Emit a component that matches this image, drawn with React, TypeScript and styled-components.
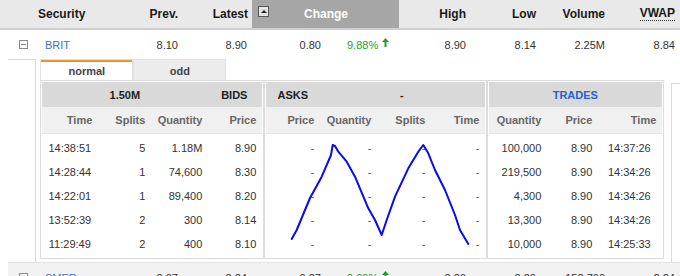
import React from 'react';
import styled, { createGlobalStyle, css } from 'styled-components';

const GlobalStyle = createGlobalStyle`
  html, body {
    margin: 0;
    padding: 0;
    background: #fff;
    overflow: hidden;
  }
  body {
    font-family: "Liberation Sans", Arial, sans-serif;
    color: #333;
  }
`;

const COLS = '92px 53px 69px 74px 73px 72px 70px 69px 70px';

const Page = styled.div`
  width: 680px;
  height: 276px;
  overflow: hidden;
`;

const HeaderRow = styled.div`
  display: grid;
  grid-template-columns: 38px ${COLS};
  height: 28px;
  background: #e9e9e9;
  border-bottom: 2px solid #cfcfcf;
  font-size: 12px;
  font-weight: bold;
  color: #1a1a1a;
`;

const HeadCell = styled.div<{ $align?: 'left' | 'right'; $pad?: number; $dotted?: boolean }>`
  display: flex;
  align-items: center;
  justify-content: ${p => (p.$align === 'left' ? 'flex-start' : 'flex-end')};
  padding-right: ${p => (p.$align === 'left' ? 0 : p.$pad ?? 5)}px;
  span {
    ${p =>
      p.$dotted &&
      css`
        border-bottom: 1px dotted #333;
        line-height: 13px;
      `}
  }
`;

const ChangeHead = styled.div`
  grid-column: span 2;
  display: flex;
  align-items: center;
  background: #a6a6a6;
  color: #fff;
  padding: 0 16px 0 6px;
  span {
    flex: 1;
    text-align: center;
  }
`;

const SortBox = styled.div`
  width: 9px;
  height: 9px;
  border: 1px solid #555;
  background: #e4e4e4;
  margin-top: -6px;
  display: flex;
  align-items: center;
  justify-content: center;
  &::after {
    content: '';
    border-left: 3px solid transparent;
    border-right: 3px solid transparent;
    border-bottom: 3px solid #222;
  }
`;

const DataRow = styled.div<{ $shaded?: boolean }>`
  display: grid;
  grid-template-columns: 30px ${COLS};
  height: 29px;
  margin-left: 8px;
  font-size: 11px;
  color: #333;
  background: ${p => (p.$shaded ? '#f2f2f2' : '#fff')};
  border-top: ${p => (p.$shaded ? '1px solid #e2e2e2' : 'none')};
`;

const Cell = styled.div<{ $align?: 'left' | 'right'; $padLeft?: number }>`
  display: flex;
  align-items: center;
  justify-content: ${p => (p.$align === 'left' ? 'flex-start' : 'flex-end')};
  padding-left: ${p => p.$padLeft ?? 0}px;
  padding-right: ${p => (p.$align === 'left' ? 0 : 5)}px;
`;

const Expander = styled.div`
  display: flex;
  align-items: center;
  padding-left: 11px;
  &::before {
    content: '';
    width: 7px;
    height: 7px;
    border: 1px solid #8a8a8a;
    background: linear-gradient(#8a8a8a, #8a8a8a) center / 5px 1px no-repeat;
  }
`;

const Link = styled.span`
  color: #3b6fd4;
`;

const Up = styled.span`
  color: #1f9e2a;
  display: inline-flex;
  align-items: center;
  gap: 4px;
  svg {
    margin-top: -5px;
  }
`;

const DetailRow = styled.div`
  display: flex;
  margin-left: 8px;
  height: 203px;
`;

const Gutter = styled.div`
  box-sizing: border-box;
  width: 33px;
  border-top: 1px solid #dcdcdc;
  border-right: 1px solid #dcdcdc;
`;

const Panel = styled.div`
  margin-left: 4px;
  width: 624px;
  display: flex;
  flex-direction: column;
`;

const Tabs = styled.div`
  display: flex;
  height: 21px;
`;

const Tab = styled.div<{ $active?: boolean; $w: number }>`
  box-sizing: border-box;
  width: ${p => p.$w}px;
  border: 1px solid #e2e2e2;
  border-bottom: none;
  background: ${p => (p.$active ? '#fff' : '#ececec')};
  box-shadow: ${p => (p.$active ? 'inset 0 2px 0 #f0922e' : 'none')};
  font-size: 11px;
  font-weight: bold;
  color: #444;
  display: flex;
  align-items: center;
  justify-content: center;
  padding-top: 1px;
`;

const Boxes = styled.div`
  display: flex;
  height: 179px;
`;

const Box = styled.div<{ $w: number }>`
  box-sizing: border-box;
  width: ${p => p.$w}px;
  border: 1px solid #dcdcdc;
  padding: 1px;
  font-size: 11px;
`;

const Grid = styled.div<{ $cols: string }>`
  display: grid;
  grid-template-columns: ${p => p.$cols};
`;

const Band = styled(Grid)`
  height: 25px;
  background: #d9d9d9;
  font-weight: bold;
  color: #1e1e1e;
`;

const SubHead = styled(Grid)`
  height: 26px;
  background: #f0f0f0;
  border-bottom: 1px solid #e4e4e4;
  font-weight: bold;
  color: #666;
`;

const Body = styled.div`
  position: relative;
  padding-top: 2px;
`;

const BodyRow = styled(Grid)`
  height: 24px;
  color: #333;
`;

const T = styled.div<{ $align?: 'left' | 'right' | 'center'; $span?: number; $color?: string; $pl?: number }>`
  grid-column: span ${p => p.$span ?? 1};
  display: flex;
  align-items: center;
  justify-content: ${p =>
    p.$align === 'center' ? 'center' : p.$align === 'left' ? 'flex-start' : 'flex-end'};
  padding-right: ${p => (p.$align === 'right' || !p.$align ? 5 : 0)}px;
  padding-left: ${p => p.$pl ?? 0}px;
  color: ${p => p.$color ?? 'inherit'};
`;

const Spark = styled.svg`
  position: absolute;
  left: 0;
  top: 2px;
  pointer-events: none;
`;

const SideBox = styled.div`
  box-sizing: border-box;
  margin: 24px 0 0 7px;
  width: 10px;
  border-left: 1px solid #dcdcdc;
  border-top: 1px solid #dcdcdc;
`;

const Arrow = () => (
  <svg width="7" height="9" viewBox="0 0 7 9">
    <path d="M3.5 0 L7 4 L0 4 Z" fill="#1f9e2a" />
    <rect x="2.5" y="3.5" width="2" height="5.5" fill="#1f9e2a" />
  </svg>
);

const bids = [
  ['14:38:51', '5', '1.18M', '8.90'],
  ['14:28:44', '1', '74,600', '8.30'],
  ['14:22:01', '1', '89,400', '8.20'],
  ['13:52:39', '2', '300', '8.14'],
  ['11:29:49', '2', '400', '8.10'],
];

const trades = [
  ['100,000', '8.90', '14:37:26'],
  ['219,500', '8.90', '14:34:26'],
  ['4,300', '8.90', '14:34:26'],
  ['13,300', '8.90', '14:34:26'],
  ['10,000', '8.90', '14:25:33'],
];

const sparkPoints = [
  [25.7, 103], [30.7, 94], [44, 62], [55.7, 40.7], [65, 19], [66.7, 9], [69, 10],
  [72.3, 15.7], [80.7, 25.7], [89, 40.7], [102.3, 72.3], [109, 84], [115.7, 99],
  [120.7, 84], [129, 60.7], [142.3, 32.3], [152.3, 15.7], [157.3, 9], [162.3, 17.3],
  [169, 34], [179, 54], [189, 79], [194, 94], [202.3, 108],
];

const BID_COLS = '55px 53px 57px 54px';
const ASK_COLS = '53px 57px 54px 54px';
const TRADE_COLS = '57px 51px 64px';

interface QuoteProps {
  code: string;
  prev: string;
  latest: string;
  change: string;
  pct: string;
  high: string;
  low: string;
  volume: string;
  vwap: string;
  shaded?: boolean;
}

const QuoteRow: React.FC<QuoteProps> = ({ code, prev, latest, change, pct, high, low, volume, vwap, shaded }) => (
  <DataRow $shaded={shaded}>
    <Expander />
    <Cell $align="left" $padLeft={7}>
      <Link>{code}</Link>
    </Cell>
    <Cell>{prev}</Cell>
    <Cell>{latest}</Cell>
    <Cell>{change}</Cell>
    <Cell $align="left" $padLeft={21}>
      <Up>
        {pct}
        <Arrow />
      </Up>
    </Cell>
    <Cell>{high}</Cell>
    <Cell>{low}</Cell>
    <Cell>{volume}</Cell>
    <Cell>{vwap}</Cell>
  </DataRow>
);

export default function App() {
  return (
    <Page>
      <GlobalStyle />
      <HeaderRow>
        <div />
        <HeadCell $align="left">Security</HeadCell>
        <HeadCell>Prev.</HeadCell>
        <HeadCell $pad={4}>Latest</HeadCell>
        <ChangeHead>
          <SortBox />
          <span>Change</span>
        </ChangeHead>
        <HeadCell>High</HeadCell>
        <HeadCell>Low</HeadCell>
        <HeadCell>Volume</HeadCell>
        <HeadCell $dotted>
          <span>VWAP</span>
        </HeadCell>
      </HeaderRow>

      <QuoteRow code="BRIT" prev="8.10" latest="8.90" change="0.80" pct="9.88%" high="8.90" low="8.14" volume="2.25M" vwap="8.84" />

      <DetailRow>
        <Gutter />
        <Panel>
          <Tabs>
            <Tab $active $w={93}>normal</Tab>
            <Tab $w={93}>odd</Tab>
          </Tabs>
          <Boxes>
            <Box $w={224}>
              <Band $cols={BID_COLS}>
                <T $span={3} $align="center">1.50M</T>
                <T $align="center">BIDS</T>
              </Band>
              <SubHead $cols={BID_COLS}>
                <T>Time</T>
                <T>Splits</T>
                <T>Quantity</T>
                <T>Price</T>
              </SubHead>
              <Body>
                {bids.map(r => (
                  <BodyRow key={r[0]} $cols={BID_COLS}>
                    <T $align="center">{r[0]}</T>
                    <T>{r[1]}</T>
                    <T>{r[2]}</T>
                    <T>{r[3]}</T>
                  </BodyRow>
                ))}
              </Body>
            </Box>
            <Box $w={223}>
              <Band $cols={ASK_COLS}>
                <T $align="center">ASKS</T>
                <T $span={3} $align="center">-</T>
              </Band>
              <SubHead $cols={ASK_COLS}>
                <T>Price</T>
                <T>Quantity</T>
                <T>Splits</T>
                <T>Time</T>
              </SubHead>
              <Body>
                {bids.map(r => (
                  <BodyRow key={r[0]} $cols={ASK_COLS}>
                    <T $color="#555">-</T>
                    <T $color="#555">-</T>
                    <T $color="#555">-</T>
                    <T $color="#555">-</T>
                  </BodyRow>
                ))}
                <Spark width="219" height="120" viewBox="0 0 219 120">
                  <polyline
                    points={sparkPoints.map(p => p.join(',')).join(' ')}
                    fill="none"
                    stroke="#0a0af0"
                    strokeWidth="2"
                    strokeLinejoin="round"
                    strokeLinecap="round"
                  />
                </Spark>
              </Body>
            </Box>
            <Box $w={177}>
              <Band $cols={TRADE_COLS}>
                <T $span={3} $align="center" $color="#2b5fd0">TRADES</T>
              </Band>
              <SubHead $cols={TRADE_COLS}>
                <T>Quantity</T>
                <T>Price</T>
                <T>Time</T>
              </SubHead>
              <Body>
                {trades.map((r, i) => (
                  <BodyRow key={i} $cols={TRADE_COLS}>
                    <T>{r[0]}</T>
                    <T>{r[1]}</T>
                    <T $align="center">{r[2]}</T>
                  </BodyRow>
                ))}
              </Body>
            </Box>
          </Boxes>
        </Panel>
        <SideBox />
      </DetailRow>

      <QuoteRow shaded code="SMER" prev="2.07" latest="2.24" change="0.27" pct="9.09%" high="2.26" low="2.20" volume="152,700" vwap="2.24" />
    </Page>
  );
}
